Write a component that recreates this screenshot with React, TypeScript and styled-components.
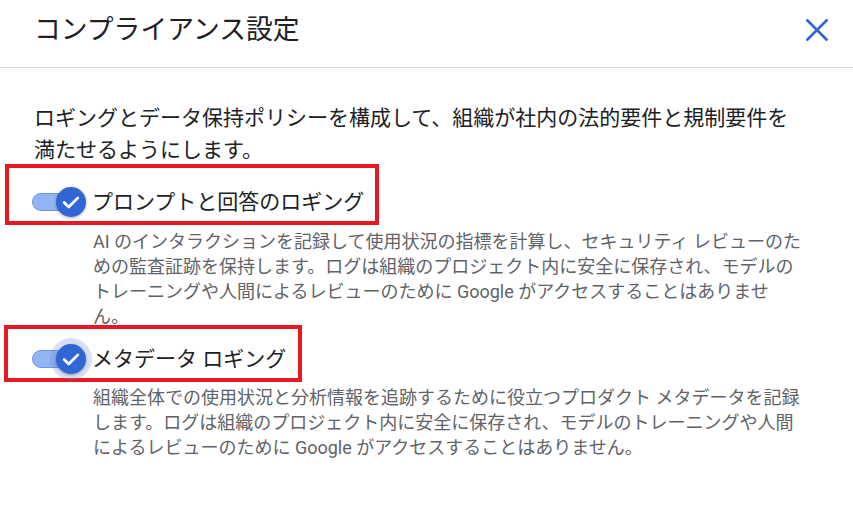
import React from "react";
import styled, { createGlobalStyle } from "styled-components";

const GlobalStyle = createGlobalStyle`
  html, body {
    margin: 0;
    padding: 0;
    background: #ffffff;
  }
  body {
    font-family: Roboto, "Noto Sans CJK JP", "Noto Sans", sans-serif;
    color: #202124;
  }
`;

const Page = styled.div`
  width: 853px;
  height: 505px;
  background: #ffffff;
  overflow: hidden;
`;

const Header = styled.header`
  box-sizing: border-box;
  height: 68px;
  padding: 0 25px 7px 34px;
  border-bottom: 1px solid #dadce0;
  display: flex;
  align-items: center;
  justify-content: space-between;
`;

const Title = styled.h1`
  margin: 0;
  font-size: 26.8px;
  font-weight: 400;
  line-height: 34px;
  color: #202124;
`;

const CloseButton = styled.button`
  width: 22px;
  height: 22px;
  padding: 0;
  border: none;
  background: transparent;
  display: flex;
  align-items: center;
  justify-content: center;
  cursor: pointer;
`;

const Spacer = styled.div`
  height: 34px;
`;

const Intro = styled.p`
  margin: 0 0 -2px 34px;
  font-size: 21px;
  line-height: 32px;
  color: #202124;
`;

const Highlight = styled.div<{ $w: number; $h: number; $left: number; $pt: number; $pl: number; $mt: number }>`
  box-sizing: border-box;
  width: ${(p) => p.$w}px;
  height: ${(p) => p.$h}px;
  margin-left: ${(p) => p.$left}px;
  margin-top: ${(p) => p.$mt}px;
  border: 4px solid #e5191f;
  padding: ${(p) => p.$pt}px 0 0 ${(p) => p.$pl}px;
  display: flex;
  align-items: center;
`;

const Row = styled.div`
  display: flex;
  align-items: center;
  gap: 6px;
`;

const Label = styled.span`
  font-size: 21px;
  line-height: 28px;
  color: #202124;
  white-space: nowrap;
`;

const Toggle = styled.span`
  position: relative;
  display: inline-block;
  width: 54px;
  height: 30px;
  flex: none;
`;

const Track = styled.span`
  position: absolute;
  left: 0;
  top: 6px;
  width: 44px;
  height: 18px;
  box-sizing: border-box;
  border-radius: 9px;
  background: #93b4f2;
  border: 1px solid #6b94e6;
`;

const Halo = styled.span`
  position: absolute;
  left: 18px;
  top: -6px;
  width: 42px;
  height: 42px;
  border-radius: 50%;
  background: rgba(110, 140, 215, 0.26);
`;

const Thumb = styled.span`
  position: absolute;
  right: 0;
  top: 0;
  width: 30px;
  height: 30px;
  border-radius: 50%;
  background: #3166d6;
  box-shadow: 0 1px 3px rgba(0, 0, 0, 0.35);
  display: flex;
  align-items: center;
  justify-content: center;
`;

const Description = styled.p<{ $mt: number }>`
  margin: ${(p) => p.$mt}px 0 0 93px;
  font-size: 18px;
  line-height: 25px;
  color: #5f6368;
`;

const Check = () => (
  <svg width="22" height="22" viewBox="0 0 24 24" aria-hidden="true">
    <path d="M4.5 12.5l5 5L19.5 7.5" fill="none" stroke="#ffffff" strokeWidth="3" strokeLinecap="round" strokeLinejoin="round" />
  </svg>
);

const Switch = ({ focused }: { focused?: boolean }) => (
  <Toggle role="switch" aria-checked="true">
    <Track />
    {focused && <Halo />}
    <Thumb>
      <Check />
    </Thumb>
  </Toggle>
);

export default function App() {
  return (
    <Page>
      <GlobalStyle />
      <Header>
        <Title>コンプライアンス設定</Title>
        <CloseButton aria-label="閉じる">
          <svg width="22" height="22" viewBox="0 0 22 22" aria-hidden="true">
            <path d="M1.5 1.5L20.5 20.5M20.5 1.5L1.5 20.5" stroke="#3367d6" strokeWidth="2.7" strokeLinecap="square" fill="none" />
          </svg>
        </CloseButton>
      </Header>
      <Spacer />
      <Intro>
        ロギングとデータ保持ポリシーを構成して、組織が社内の法的要件と規制要件を
        <br />
        満たせるようにします。
      </Intro>
      <Highlight $w={374} $h={61} $left={5} $pt={15} $pl={23} $mt={0}>
        <Row>
          <Switch />
          <Label>プロンプトと回答のロギング</Label>
        </Row>
      </Highlight>
      <Description $mt={4}>
        AI のインタラクションを記録して使用状況の指標を計算し、セキュリティ レビューのた
        <br />
        めの監査証跡を保持します。ログは組織のプロジェクト内に安全に保存され、モデルの
        <br />
        トレーニングや人間によるレビューのために Google がアクセスすることはありませ
        <br />
        ん。
      </Description>
      <Highlight $w={298} $h={57} $left={4} $pt={10} $pl={24} $mt={-4}>
        <Row>
          <Switch focused />
          <Label>メタデータ ロギング</Label>
        </Row>
      </Highlight>
      <Description $mt={3}>
        組織全体での使用状況と分析情報を追跡するために役立つプロダクト メタデータを記録
        <br />
        します。ログは組織のプロジェクト内に安全に保存され、モデルのトレーニングや人間
        <br />
        によるレビューのために Google がアクセスすることはありません。
      </Description>
    </Page>
  );
}
